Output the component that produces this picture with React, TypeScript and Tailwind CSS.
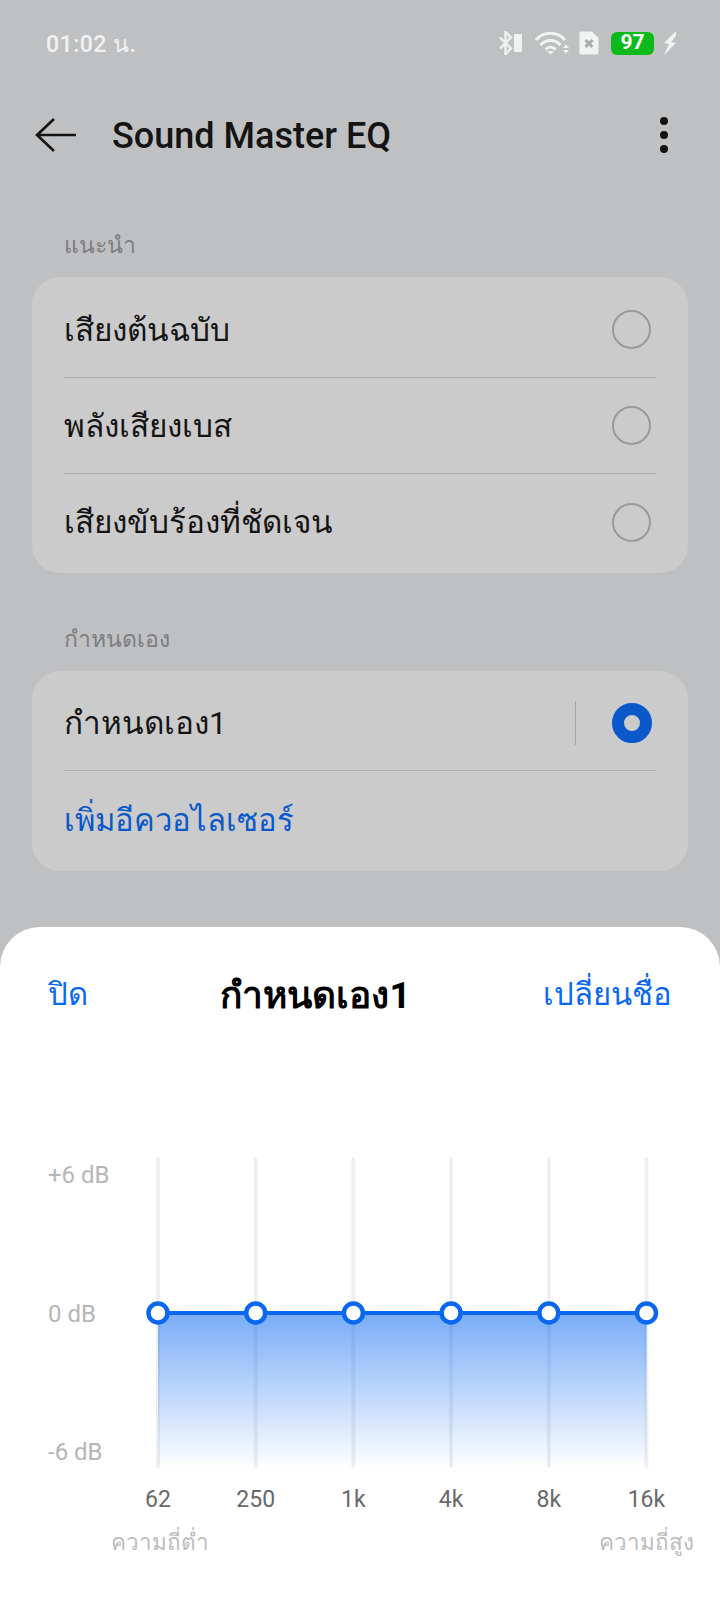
const bands = ["62", "250", "1k", "4k", "8k", "16k"];

const StatusBar = () => (
  <div className="flex h-[90px] items-center justify-between pl-[46px] pr-[43px] pb-[4px]">
    <span className="mt-[4px] text-[23px] font-medium tracking-[0.5px] text-[#f1f2f2]">01:02 น.</span>
    <div className="flex items-center">
      <svg width="24" height="24" viewBox="0 0 24 24" fill="none" stroke="#f1f2f2" strokeWidth="2.4">
        <path d="M1 6.500l11 11-5.500 5.500V1L12 6.500l-11 11" />
        <rect x="15" y="3" width="8" height="18" rx="1" fill="#f1f2f2" stroke="none" />
      </svg>
      <svg className="ml-[12px]" width="34" height="24" viewBox="0 0 34 24" fill="none" stroke="#f1f2f2" strokeWidth="3">
        <path d="M1 9c7.500-9 21.500-9 29 0" />
        <path d="M5.500 14c5.500-6 14.500-6 20 0" />
        <path d="M10.500 18.500c3-3 7-3 10 0" />
        <path d="M12 20h7l-3.500 3.500z" fill="#f1f2f2" stroke="none" />
        <path d="M28 17h6l-3-3.500zM28 19h6l-3 3.500z" fill="#f1f2f2" stroke="none" />
      </svg>
      <svg className="ml-[10px]" width="20" height="24" viewBox="0 0 20 24">
        <path d="M2 0.500h11l6.500 6.500v15a1.500 1.500 0 0 1-1.500 1.500H2A1.500 1.500 0 0 1 0.500 22V2A1.500 1.500 0 0 1 2 0.500z" fill="#f1f2f2" />
        <path d="M6.500 9l7 7M13.500 9l-7 7" stroke="#a9aaac" strokeWidth="3" />
      </svg>
      <div className="ml-[12px] flex h-[23px] w-[43px] items-center justify-center rounded-[6px] bg-[#0dba1c] text-[21px] font-bold text-white">
        97
      </div>
      <svg className="ml-[9px]" width="14" height="24" viewBox="0 0 14 24">
        <path d="M13 0L1 12l5 1-5 11 12-12-5-1 5-6z" fill="#f1f2f2" />
      </svg>
    </div>
  </div>
);

const Header = () => (
  <div className="flex h-[90px] items-center pl-[35px] pr-[52px]">
    <svg width="42" height="36" viewBox="0 0 42 36" fill="none" stroke="#141414" strokeWidth="2.6">
      <path d="M41 18H3M19 2L2 18l17 16" />
    </svg>
    <h1 className="ml-[35px] mt-[2px] flex-1 text-[36px] font-medium text-[#141414]">Sound Master EQ</h1>
    <div className="flex flex-col gap-[6px]">
      <span className="size-[8px] rounded-full bg-[#141414]" />
      <span className="size-[8px] rounded-full bg-[#141414]" />
      <span className="size-[8px] rounded-full bg-[#141414]" />
    </div>
  </div>
);

const PresetRow = ({ label }: { label: string }) => (
  <div className="flex h-[96px] items-center justify-between border-b border-[#adadae] last:border-b-0">
    <span className="pt-[2px] text-[31.5px] text-[#141414]">{label}</span>
    <span className="mr-[5px] size-[39px] rounded-full border-2 border-[#9a9a9a]" />
  </div>
);

const Chart = () => (
  <div className="flex h-[311px] items-stretch">
    <div className="flex w-[158px] flex-col justify-between pl-[48px] pt-[2px] text-[24px] leading-[32px] text-[#b6b6b6]">
      <span>+6 dB</span>
      <span>0 dB</span>
      <span>-6 dB</span>
    </div>
    <svg width="512" height="311" viewBox="0 0 512 311" className="overflow-visible">
      <defs>
        <linearGradient id="eq" x1="0" y1="0" x2="0" y2="1">
          <stop offset="0" stopColor="#0a68f0" stopOpacity="0.55" />
          <stop offset="1" stopColor="#0a68f0" stopOpacity="0" />
        </linearGradient>
      </defs>
      {[0, 1, 2, 3, 4, 5].map((i) => (
        <rect key={i} x={i * 97.7 - 2} y="0" width="4" height="311" rx="2" fill="#eeeff0" />
      ))}
      <rect x="0" y="156" width="488.500" height="155" fill="url(#eq)" />
      <line x1="0" y1="156" x2="488.500" y2="156" stroke="#0a68f0" strokeWidth="4" />
      {[0, 1, 2, 3, 4, 5].map((i) => (
        <circle key={i} cx={i * 97.7} cy="156" r="9.500" fill="#fff" stroke="#0a68f0" strokeWidth="4.500" />
      ))}
    </svg>
  </div>
);

export default function App() {
  return (
    <div className="flex h-[1604px] w-[720px] flex-col overflow-hidden bg-[#bfc0c2] font-['Roboto','Noto_Sans',sans-serif]">
      <StatusBar />
      <Header />

      <p className="mt-[50px] pl-[64px] text-[23px] leading-[32px] text-[#7d7e80]">แนะนำ</p>
      <div className="mx-[32px] mt-[15px] rounded-[28px] bg-[#cbcbcb] px-[32px] pt-[5px] pb-[3px]">
        <PresetRow label="เสียงต้นฉบับ" />
        <PresetRow label="พลังเสียงเบส" />
        <PresetRow label="เสียงขับร้องที่ชัดเจน" />
      </div>

      <p className="mt-[51px] pl-[64px] text-[23px] leading-[32px] text-[#7d7e80]">กำหนดเอง</p>
      <div className="mx-[32px] mt-[15px] rounded-[28px] bg-[#cbcbcb] px-[32px] pt-[4px]">
        <div className="flex h-[96px] items-center border-b border-[#adadae]">
          <span className="flex-1 pt-[2px] text-[31.5px] text-[#141414]">กำหนดเอง1</span>
          <span className="h-[44px] w-px bg-[#a6a6a7]" />
          <span className="ml-[36px] mr-[4px] size-[40px] rounded-full border-[12px] border-[#0a58ca] bg-[#cbcbcb]" />
        </div>
        <div className="flex h-[100px] items-center text-[31px] text-[#0a58ca]">เพิ่มอีควอไลเซอร์</div>
      </div>

      <div className="mt-[56px] flex-1 rounded-t-[40px] bg-white">
        <div className="mt-[43px] flex h-[51px] items-center justify-between px-[48px]">
          <span className="text-[31px] text-[#0a68f0]">ปิด</span>
          <span className="text-[37px] font-bold text-black">กำหนดเอง1</span>
          <span className="text-[31px] text-[#0a68f0]">เปลี่ยนชื่อ</span>
        </div>
        <div className="mt-[136px]">
          <Chart />
        </div>
        <div className="mt-[16px] flex pl-[128px]">
          {bands.map((b) => (
            <span key={b} className="mr-[37.7px] w-[60px] text-center text-[23px] leading-[32px] text-[#696969]">
              {b}
            </span>
          ))}
        </div>
        <div className="mt-[10px] flex justify-between pl-[111px] pr-[26px] text-[22.5px] leading-[32px] text-[#bdbdbd]">
          <span>ความถี่ต่ำ</span>
          <span>ความถี่สูง</span>
        </div>
      </div>
    </div>
  );
}
